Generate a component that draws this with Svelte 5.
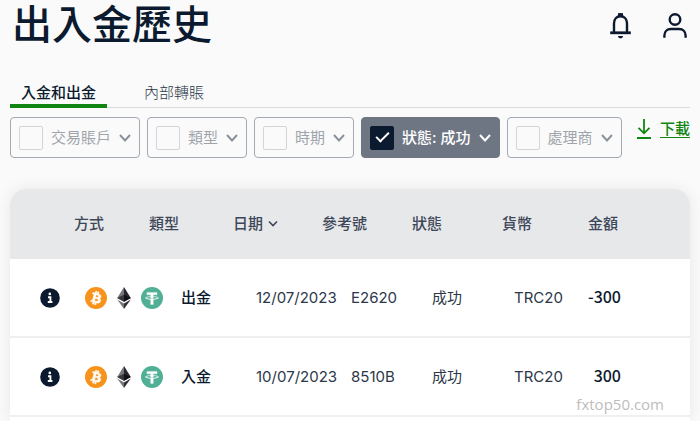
<script>
  const filters = $state([
    { label: '交易賬戶', checked: false },
    { label: '類型', checked: false },
    { label: '時期', checked: false },
    { label: '狀態: 成功', checked: true },
    { label: '處理商', checked: false },
  ]);

  const rows = [
    { type: '出金', date: '12/07/2023', ref: 'E2620', status: '成功', currency: 'TRC20', amount: '-300' },
    { type: '入金', date: '10/07/2023', ref: '8510B', status: '成功', currency: 'TRC20', amount: '300' },
  ];
</script>

<main>
  <header>
    <h1>出入金歷史</h1>
    <div class="actions">
      <button aria-label="通知">
        <svg width="24" height="28" viewBox="0 0 24 28" fill="none" stroke="currentColor" stroke-width="2.4">
          <path d="M5 20.500V11.500C5 7 7.600 4.300 11.500 4.300S18 7 18 11.500V20.500" />
          <path d="M1.200 20.800H21.800" stroke-width="2.800" />
          <path d="M9 2.800H14" stroke-width="3.400" />
          <path d="M9 24H14C13.800 25.700 13 26.300 11.500 26.300S9.200 25.700 9 24Z" fill="currentColor" stroke="none" />
        </svg>
      </button>
      <button aria-label="帳戶">
        <svg width="24" height="28" viewBox="0 0 24 28" fill="none" stroke="currentColor" stroke-width="2.400">
          <circle cx="12" cy="7.500" r="5.300" />
          <path d="M1.400 25.800V23.500C1.400 19.500 4 17 8 17H16C20 17 22.600 19.500 22.600 23.500V25.800" />
        </svg>
      </button>
    </div>
  </header>

  <nav>
    <a class="active" href="#transfers">入金和出金</a>
    <a href="#internal">內部轉賬</a>
  </nav>

  <div class="toolbar">
    {#each filters as filter}
      <label class="chip" class:selected={filter.checked}>
        <input type="checkbox" bind:checked={filter.checked} />
        <span>{filter.label}</span>
        <svg width="12" height="12" viewBox="0 0 12 12" fill="none" stroke="currentColor" stroke-width="2"><path d="M1 3L6 8.500L11 3" /></svg>
      </label>
    {/each}
    <a class="download" href="#download">
      <svg width="14" height="20" viewBox="0 0 14 20" fill="none" stroke="currentColor" stroke-width="1.800"><path d="M7 0V14M1.500 8.800L7 14.300L12.500 8.800M0 19H14" /></svg>
      <span>下載</span>
    </a>
  </div>

  <div class="card">
    <table>
      <thead>
        <tr>
          <td></td>
          <th>方式</th>
          <th>類型</th>
          <th>日期<svg class="sort" width="10" height="8" viewBox="0 0 10 8" fill="none" stroke="currentColor" stroke-width="1.600"><path d="M1 1.500L5 5.500L9 1.500" /></svg></th>
          <th>參考號</th>
          <th>狀態</th>
          <th>貨幣</th>
          <th>金額</th>
        </tr>
      </thead>
      <tbody>
        {#each rows as row}
          <tr>
            <td class="info">
              <button aria-label="詳情">
                <svg width="20" height="20" viewBox="0 0 20 20"><circle cx="10" cy="10" r="9.800" fill="#0c1a2f" /><circle cx="9.800" cy="5.900" r="1.300" fill="#fff" /><path d="M8 9.200H10.400V14M7.800 14H12.400" fill="none" stroke="#fff" stroke-width="1.900" /></svg>
              </button>
            </td>
            <td class="methods">
              <svg width="22" height="22" viewBox="0 0 32 32" role="img" aria-label="Bitcoin"><circle cx="16" cy="16" r="16" fill="#f7931a" /><path fill="#fff" stroke="#fff" stroke-width=".8" d="M23.189 14.020c.314-2.096-1.283-3.223-3.465-3.975l.708-2.840-1.728-.430-.690 2.765c-.454-.114-.920-.220-1.385-.326l.695-2.783L15.596 6l-.708 2.839c-.376-.086-.746-.170-1.104-.260l.002-.009-2.384-.595-.460 1.846s1.283.294 1.256.312c.700.175.826.638.805 1.006l-.806 3.235c.048.012.110.030.180.057l-.183-.045-1.130 4.532c-.086.212-.303.531-.793.410.018.025-1.256-.313-1.256-.313l-.858 1.978 2.250.561c.418.105.828.215 1.231.318l-.715 2.872 1.727.430.708-2.840c.472.127.930.245 1.378.357l-.706 2.828 1.728.430.715-2.866c2.948.558 5.164.333 6.097-2.333.752-2.146-.037-3.385-1.588-4.192 1.130-.260 1.980-1.003 2.207-2.538zm-3.950 5.538c-.533 2.147-4.148.986-5.320.695l.950-3.805c1.172.293 4.929.872 4.370 3.110zm.535-5.569c-.487 1.953-3.495.960-4.470.717l.860-3.450c.975.243 4.118.696 3.610 2.733z" /></svg>
              <svg width="14" height="22" viewBox="0 0 14 22" role="img" aria-label="Ethereum"><path d="M7 0V14.800L.2 11Z" fill="#77777b" /><path d="M7 0V14.800L13.800 11Z" fill="#29292d" /><path d="M.2 11L7 7.800V14.800Z" fill="#38383c" /><path d="M13.800 11L7 7.800V14.800Z" fill="#121216" /><path d="M.2 12.400L7 16.500V22Z" fill="#77777b" /><path d="M13.800 12.400L7 16.500V22Z" fill="#303034" /></svg>
              <svg width="22" height="22" viewBox="0 0 32 32" role="img" aria-label="Tether"><circle cx="16" cy="16" r="16" fill="#50af95" /><path fill="#fff" stroke="#fff" stroke-width=".4" d="M17.922 17.383v-.002c-.110.008-.677.042-1.942.042-1.010 0-1.721-.030-1.971-.042v.003c-3.888-.171-6.790-.848-6.790-1.658 0-.809 2.902-1.486 6.790-1.660v2.644c.254.018.982.061 1.988.061 1.207 0 1.812-.050 1.925-.060v-2.643c3.880.173 6.775.850 6.775 1.658 0 .810-2.895 1.485-6.775 1.657m0-3.590v-2.366h5.414V7.819H8.595v3.608h5.414v2.365c-4.400.202-7.709 1.074-7.709 2.118 0 1.044 3.309 1.915 7.709 2.118v7.582h3.913v-7.584c4.393-.202 7.694-1.073 7.694-2.116 0-1.043-3.301-1.914-7.694-2.117" /></svg>
            </td>
            <td class="type">{row.type}</td>
            <td>{row.date}</td>
            <td>{row.ref}</td>
            <td>{row.status}</td>
            <td>{row.currency}</td>
            <td class="amount">{row.amount}</td>
          </tr>
        {/each}
      </tbody>
    </table>
  </div>
  <div class="watermark">fxtop50.com</div>
</main>

<style>
  :global(body) {
    background: #fafafa;
  }
  main {
    box-sizing: border-box;
    min-height: 100vh;
    padding: 0 10px;
    display: flex;
    flex-direction: column;
    position: relative;
    font: 15px/24px Inter, "Noto Sans CJK TC", sans-serif;
    color: #0c1a2f;
  }
  button {
    padding: 0;
    border: 0;
    background: none;
    color: inherit;
    display: flex;
  }
  svg {
    display: block;
    flex: none;
  }
  header {
    display: flex;
    justify-content: space-between;
    height: 52px;
  }
  h1 {
    margin: 0;
    padding-left: 2px;
    font: 500 40px/50px Inter, "Noto Sans CJK TC", sans-serif;
  }
  .actions {
    display: flex;
    align-items: center;
    gap: 30px;
    padding-right: 3px;
  }
  nav {
    display: flex;
    gap: 26px;
    margin-top: 28px;
    border-bottom: 1px solid #d8dadd;
  }
  nav a {
    box-sizing: border-box;
    height: 28px;
    margin-bottom: -1px;
    padding: 0 11px;
    color: #2c3849;
    font-weight: 300;
    line-height: 26px;
    text-decoration: none;
  }
  nav .active {
    border-bottom: 4px solid #118511;
    color: #0c1a2f;
    font-weight: 500;
  }
  .toolbar {
    display: flex;
    gap: 7px;
    margin-top: 9px;
  }
  .chip {
    box-sizing: border-box;
    height: 41px;
    display: flex;
    align-items: center;
    gap: 8px;
    padding: 0 8px;
    border: 1px solid #a2a9b3;
    border-radius: 4px;
    color: #9fa4ab;
    white-space: nowrap;
  }
  .chip svg {
    color: #8b929c;
  }
  .chip input {
    appearance: none;
    box-sizing: border-box;
    width: 24px;
    height: 24px;
    margin: 0;
    border: 1px solid #d2d5d8;
    border-radius: 2px;
  }
  .chip input:checked {
    border-color: #0c1a2f;
    background: #0c1a2f;
    display: grid;
    place-items: center;
  }
  .chip input:checked::before {
    content: "";
    width: 11px;
    height: 5px;
    margin-bottom: 5px;
    border: solid #fff;
    border-width: 0 0 2px 2px;
    transform: rotate(-45deg);
  }
  .selected {
    border-color: #6e7684;
    background: #6e7684;
    color: #fff;
    font-weight: 500;
  }
  .selected svg {
    color: #fff;
  }
  .download {
    display: flex;
    gap: 9px;
    align-items: center;
    height: 24px;
    margin-left: auto;
    color: #118511;
    font-weight: 500;
    text-underline-offset: 3px;
    white-space: nowrap;
  }
  .card {
    flex: 1;
    margin-top: 31px;
    border-radius: 16px 16px 0 0;
    background: #fff;
    box-shadow: 0 0 16px rgba(12, 26, 47, 0.08);
    overflow: hidden;
  }
  table,
  thead,
  tbody {
    display: block;
  }
  tr {
    display: grid;
    align-items: center;
    white-space: nowrap;
  }
  th,
  td {
    padding: 0;
    min-width: 0;
  }
  thead tr {
    height: 70px;
    grid-template-columns: 64fr 75fr 84fr 89fr 90fr 90fr 86fr 102fr;
    background: #e7e8ea;
    color: #3d4758;
  }
  th {
    font-weight: 500;
    text-align: left;
  }
  .sort {
    display: inline-block;
    margin-left: 5px;
    vertical-align: 1px;
  }
  tbody tr {
    box-sizing: border-box;
    height: 79px;
    grid-template-columns: 75fr 96fr 75fr 95fr 81fr 82fr 60fr 47fr 69fr;
    border-bottom: 2px solid #eeeff0;
    color: #2c3849;
  }
  .info {
    padding-left: 30px;
  }
  .methods {
    display: flex;
    gap: 10px;
  }
  .type {
    color: #0c1a2f;
    font-weight: 500;
  }
  .amount {
    padding-bottom: 3px;
    color: #0c1a2f;
    font: 500 16px/24px "Noto Sans CJK TC", sans-serif;
    text-align: right;
  }
  .watermark {
    position: absolute;
    right: 36px;
    bottom: 5px;
    color: #bdbdbd;
    font: 15px/24px "Open Sans", sans-serif;
  }
</style>
